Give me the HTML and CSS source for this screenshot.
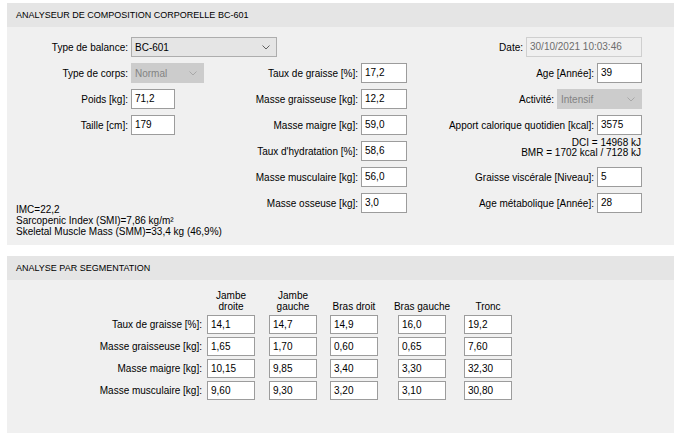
FILE: index.html
```html
<!DOCTYPE html>
<html lang="fr">
<head>
  <meta charset="UTF-8">
  <meta name="viewport" content="width=device-width, initial-scale=1.0">
  <title>Analyseur BC-601</title>
  <link rel="stylesheet" href="styles.css">
</head>
<body>
  <div class="panel">
    <div class="panel-title">ANALYSEUR DE COMPOSITION CORPORELLE BC-601</div>
    <div class="form-grid">
      <!-- row 1 -->
      <span class="lbl">Type de balance:</span>
      <div class="span-2">
        <div class="select w146">
          <span>BC-601</span>
          <svg width="8" height="5" viewBox="0 0 8 5"><path d="M0.5 0.5 L4 4 L7.5 0.5" fill="none" stroke="#606060" stroke-width="1"/></svg>
        </div>
      </div>
      <div></div>
      <div class="group span-2">
        <span class="lbl">Date:</span>
        <span class="field disabled w116">30/10/2021 10:03:46</span>
      </div>

      <!-- row 2 -->
      <span class="lbl">Type de corps:</span>
      <div>
        <div class="select disabled w73">
          <span>Normal</span>
          <svg width="8" height="5" viewBox="0 0 8 5"><path d="M0.5 0.5 L4 4 L7.5 0.5" fill="none" stroke="#a8a8a8" stroke-width="1"/></svg>
        </div>
      </div>
      <span class="lbl">Taux de graisse [%]:</span>
      <span class="field w46">17,2</span>
      <span class="lbl">Age [Année]:</span>
      <span class="field w45">39</span>

      <!-- row 3 -->
      <span class="lbl">Poids [kg]:</span>
      <span class="field w44">71,2</span>
      <span class="lbl">Masse graisseuse [kg]:</span>
      <span class="field w46">12,2</span>
      <div class="group span-2">
        <span class="lbl">Activité:</span>
        <div class="select disabled w85">
          <span>Intensif</span>
          <svg width="8" height="5" viewBox="0 0 8 5"><path d="M0.5 0.5 L4 4 L7.5 0.5" fill="none" stroke="#a8a8a8" stroke-width="1"/></svg>
        </div>
      </div>

      <!-- row 4 -->
      <span class="lbl">Taille [cm]:</span>
      <span class="field w44">179</span>
      <span class="lbl">Masse maigre [kg]:</span>
      <span class="field w46">59,0</span>
      <span class="lbl">Apport calorique quotidien [kcal]:</span>
      <span class="field w45">3575</span>

      <!-- row 5 -->
      <div></div>
      <div></div>
      <span class="lbl">Taux d'hydratation [%]:</span>
      <span class="field w46">58,6</span>
      <div class="note span-2">DCI = 14968 kJ<br>BMR = 1702 kcal / 7128 kJ</div>

      <!-- rows 6-8 -->
      <div class="summary">
        IMC=22,2<br>
        Sarcopenic Index (SMI)=7,86 kg/m²<br>
        Skeletal Muscle Mass (SMM)=33,4 kg (46,9%)
      </div>
      <span class="lbl">Masse musculaire [kg]:</span>
      <span class="field w46">56,0</span>
      <span class="lbl">Graisse viscérale [Niveau]:</span>
      <span class="field w45">5</span>

      <span class="lbl">Masse osseuse [kg]:</span>
      <span class="field w46">3,0</span>
      <span class="lbl">Age métabolique [Année]:</span>
      <span class="field w45">28</span>
    </div>
  </div>

  <div class="panel panel-seg">
    <div class="panel-title">ANALYSE PAR SEGMENTATION</div>
    <div class="seg-grid">
      <div></div>
      <div class="colhead"><span>Jambe<br>droite</span></div>
      <div class="colhead"><span>Jambe<br>gauche</span></div>
      <div class="colhead"><span>Bras droit</span></div>
      <div class="colhead"><span>Bras gauche</span></div>
      <div class="colhead"><span>Tronc</span></div>

      <span class="lbl">Taux de graisse [%]:</span>
      <span class="field">14,1</span>
      <span class="field">14,7</span>
      <span class="field">14,9</span>
      <span class="field">16,0</span>
      <span class="field">19,2</span>

      <span class="lbl">Masse graisseuse [kg]:</span>
      <span class="field">1,65</span>
      <span class="field">1,70</span>
      <span class="field">0,60</span>
      <span class="field">0,65</span>
      <span class="field">7,60</span>

      <span class="lbl">Masse maigre [kg]:</span>
      <span class="field">10,15</span>
      <span class="field">9,85</span>
      <span class="field">3,40</span>
      <span class="field">3,30</span>
      <span class="field">32,30</span>

      <span class="lbl">Masse musculaire [kg]:</span>
      <span class="field">9,60</span>
      <span class="field">9,30</span>
      <span class="field">3,20</span>
      <span class="field">3,10</span>
      <span class="field">30,80</span>
    </div>
  </div>
</body>
</html>
```

FILE: styles.css
```css
body {
  margin: 0;
  font-family: "Liberation Sans", Arial, sans-serif;
  font-size: 10px;
  color: #000;
  background-color: #fff;
}

.panel {
  margin: 3px 6px 0 7px;
  background-color: #f0f0f0;
}

.panel-seg {
  margin-top: 11px;
}

.panel-title {
  height: 24px;
  line-height: 24px;
  padding-left: 9px;
  font-size: 9px;
  background-color: #e5e5e5;
}

/* main form: label / field pairs in three columns */
.form-grid {
  display: grid;
  grid-template-columns: 121px 102px 128px 72px 164px 48px;
  grid-template-rows: repeat(7, 20px) 18px;
  row-gap: 6px;
  align-items: center;
  padding: 10px 0 8px;
}

.lbl {
  text-align: right;
  white-space: nowrap;
}

.span-2 {
  grid-column: span 2;
}

.group {
  display: flex;
  justify-content: flex-end;
  align-items: center;
}

.field {
  display: block;
  justify-self: start;
  box-sizing: border-box;
  height: 20px;
  line-height: 18px;
  margin-left: 3px;
  padding-left: 3px;
  border: 1px solid #9c9c9c;
  background-color: #fff;
  white-space: nowrap;
}

.field.disabled {
  border-color: #cfcfcf;
  background-color: #f0f0f0;
  color: #6d6d6d;
}

.select {
  display: flex;
  justify-content: space-between;
  align-items: center;
  box-sizing: border-box;
  height: 20px;
  margin-left: 3px;
  padding: 0 6px 0 3px;
  border: 1px solid #adadad;
  background-color: #e5e5e5;
}

.select.disabled {
  border-color: #cccccc;
  background-color: #cccccc;
  color: #838383;
}

.w44 { width: 44px; }
.w45 { width: 45px; }
.w46 { width: 46px; }
.w73 { width: 73px; }
.w85 { width: 85px; }
.w116 { width: 116px; }
.w146 { width: 146px; }

.note {
  text-align: right;
  line-height: 10px;
  padding-right: 1px;
  margin-top: -6px;
}

.summary {
  grid-column: 1 / 3;
  grid-row: 6 / 9;
  align-self: end;
  padding-left: 9px;
  line-height: 11px;
}

/* segmentation table */
.seg-grid {
  display: grid;
  grid-template-columns: 200px 62px 61px 68px 66px 49px;
  grid-template-rows: 22px repeat(4, 19px);
  row-gap: 3px;
  align-items: center;
  padding: 10px 0 33px;
}

.seg-grid .lbl {
  padding-right: 5px;
}

.seg-grid .field {
  width: 48px;
  height: 19px;
  line-height: 17px;
  margin-left: 0;
}

.colhead {
  display: flex;
  justify-content: center;
  align-self: end;
  width: 48px;
  line-height: 11px;
  text-align: center;
  white-space: nowrap;
}
```
